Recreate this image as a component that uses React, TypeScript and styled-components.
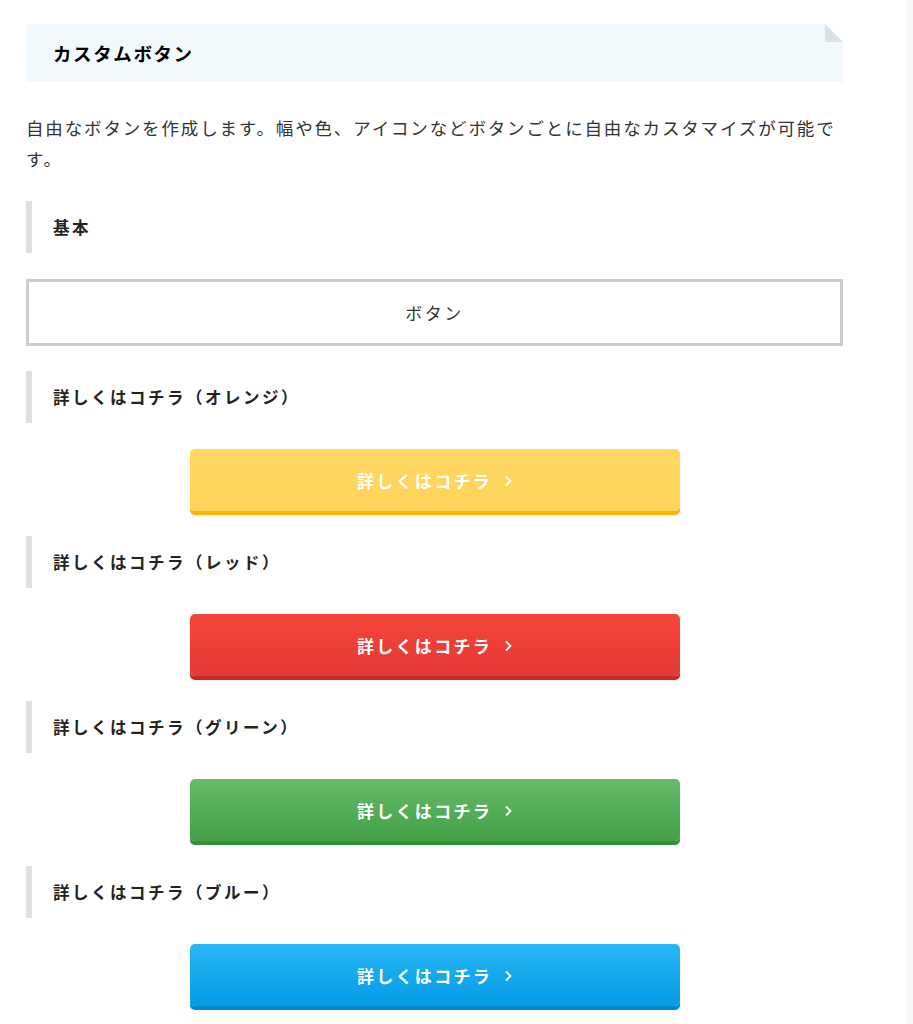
import React from "react";
import styled, { createGlobalStyle } from "styled-components";

const Global = createGlobalStyle`
  html, body { margin: 0; padding: 0; background: #fff; }
  body {
    font-family: "Noto Sans CJK JP", "Noto Sans", sans-serif;
    color: #333;
  }
`;

const Page = styled.div`
  display: flex;
  min-height: 1024px;
`;

const Main = styled.main`
  width: 817px;
  padding: 24px 0 0 26px;
  display: flex;
  flex-direction: column;
`;

const SideStrip = styled.div`
  margin-left: auto;
  width: 6px;
  background: #f7f7f7;
`;

const Title = styled.h2`
  position: relative;
  margin: 0;
  height: 58px;
  display: flex;
  align-items: center;
  padding-left: 27px;
  background: #f1f9fd;
  font-size: 18.5px;
  font-weight: 700;
  color: #000;
  letter-spacing: 1.6px;
  &::after {
    content: "";
    position: absolute;
    top: 0;
    right: 0;
    border-style: solid;
    border-width: 0 18px 18px 0;
    border-color: #fff #fff #dde1e6 #dde1e6;
  }
`;

const Lead = styled.p`
  margin: 30px 0 0;
  font-size: 17.5px;
  letter-spacing: 1.85px;
  line-height: 31px;
  color: #333;
`;

const SubHead = styled.h3<{ $mt: number }>`
  margin: ${(p) => p.$mt}px 0 0;
  height: 52px;
  display: flex;
  align-items: center;
  padding-left: 21px;
  border-left: 6px solid #e0e0e0;
  font-size: 16.5px;
  letter-spacing: 2.5px;
  font-weight: 700;
  color: #222;
`;

const BasicButton = styled.a`
  margin-top: 26px;
  height: 61px;
  border: 3px solid #cccccc;
  display: flex;
  align-items: center;
  justify-content: center;
  font-size: 17px;
  letter-spacing: 2.5px;
  color: #333;
  text-decoration: none;
  cursor: pointer;
`;

const ButtonRow = styled.div`
  margin-top: 26px;
  display: flex;
  justify-content: center;
`;

type Tone = { top: string; bottom: string; edge: string };

const tones: Record<string, Tone> = {
  orange: { top: "#ffd863", bottom: "#fed458", edge: "#ffb500" },
  red: { top: "#f4453a", bottom: "#e53935", edge: "#c62828" },
  green: { top: "#66bb6a", bottom: "#43a047", edge: "#388e3c" },
  blue: { top: "#29b6f6", bottom: "#039be5", edge: "#0288d1" },
};

const ColorButton = styled.a<{ $tone: Tone }>`
  width: 490px;
  height: 62px;
  box-sizing: border-box;
  border-radius: 5px;
  background: linear-gradient(${(p) => p.$tone.top}, ${(p) => p.$tone.bottom});
  box-shadow: 0 4px 0 ${(p) => p.$tone.edge}, 0 5px 2px rgba(0,0,0,0.08);
  display: flex;
  align-items: center;
  justify-content: center;
  gap: 12px;
  color: #fff;
  font-size: 17px;
  letter-spacing: 2.3px;
  font-weight: 700;
  text-decoration: none;
  cursor: pointer;
  margin-bottom: 4px;
`;

const Chevron = styled.svg`
  width: 8px;
  height: 12px;
  margin-top: 2px;
`;

const items = [
  { label: "（オレンジ）", tone: "orange" },
  { label: "（レッド）", tone: "red" },
  { label: "（グリーン）", tone: "green" },
  { label: "（ブルー）", tone: "blue" },
];

export default function App() {
  return (
    <Page>
      <Global />
      <Main>
        <Title>カスタムボタン</Title>
        <Lead>
          自由なボタンを作成します。幅や色、アイコンなどボタンごとに自由なカスタマイズが可能です。
        </Lead>
        <SubHead $mt={27}>基本</SubHead>
        <BasicButton>ボタン</BasicButton>
        {items.map((it, i) => (
          <React.Fragment key={it.tone}>
            <SubHead $mt={i === 0 ? 25 : 21}>詳しくはコチラ{it.label}</SubHead>
            <ButtonRow>
              <ColorButton $tone={tones[it.tone]}>
                詳しくはコチラ
                <Chevron viewBox="0 0 8 12">
                  <path d="M2 1.5 L6.5 6 L2 10.5" fill="none" stroke="#fff" strokeWidth="1.8" />
                </Chevron>
              </ColorButton>
            </ButtonRow>
          </React.Fragment>
        ))}
      </Main>
      <SideStrip />
    </Page>
  );
}
